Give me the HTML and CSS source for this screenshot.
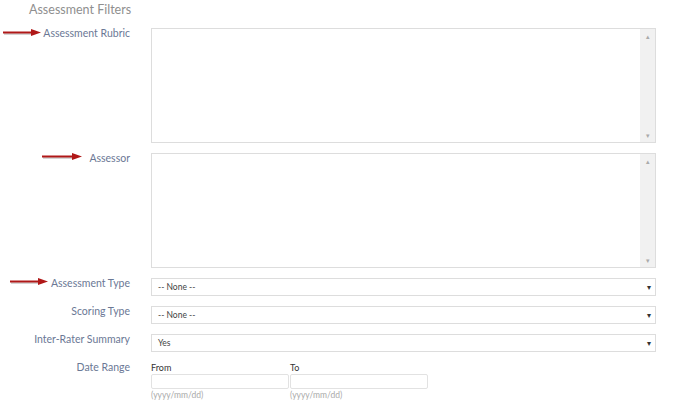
FILE: index.html
```html
<!DOCTYPE html>
<html lang="en">
<head>
    <meta charset="UTF-8">
    <meta name="viewport" content="width=device-width, initial-scale=1.0">
    <title>Assessment Filters</title>
    <link rel="stylesheet" href="styles.css">
</head>
<body>
<div class="filters">
    <h3 class="title">Assessment Filters</h3>

    <div class="row tall">
        <label class="label">
            <svg class="arrow" style="left: 3px; top: 0px;" width="40" height="10" viewBox="0 0 40 10"><line x1="1" y1="6" x2="30" y2="6" stroke="#888" stroke-width="2" opacity="0.35"/><line x1="0" y1="4.5" x2="30" y2="4.5" stroke="#b01818" stroke-width="2"/><polygon points="28,1 38,4.5 28,8" fill="#b01818"/></svg>
            Assessment Rubric
        </label>
        <div class="listbox"><div class="scroll"><span class="up">&#9652;</span><span class="down">&#9662;</span></div></div>
    </div>

    <div class="row tall">
        <label class="label">
            <svg class="arrow" style="left: 42px; top: -1px;" width="42" height="10" viewBox="0 0 42 10"><line x1="1" y1="6" x2="32" y2="6" stroke="#888" stroke-width="2" opacity="0.35"/><line x1="0" y1="4.5" x2="32" y2="4.5" stroke="#b01818" stroke-width="2"/><polygon points="30,1 40,4.5 30,8" fill="#b01818"/></svg>
            Assessor
        </label>
        <div class="listbox"><div class="scroll"><span class="up">&#9652;</span><span class="down">&#9662;</span></div></div>
    </div>

    <div class="row">
        <label class="label">
            <svg class="arrow" style="left: 10px; top: -1px;" width="40" height="10" viewBox="0 0 40 10"><line x1="1" y1="6" x2="30" y2="6" stroke="#888" stroke-width="2" opacity="0.35"/><line x1="0" y1="4.5" x2="30" y2="4.5" stroke="#b01818" stroke-width="2"/><polygon points="28,1 38,4.5 28,8" fill="#b01818"/></svg>
            Assessment Type
        </label>
        <div class="select">-- None --<span class="caret">&#9662;</span></div>
    </div>

    <div class="row">
        <label class="label">Scoring Type</label>
        <div class="select">-- None --<span class="caret">&#9662;</span></div>
    </div>

    <div class="row">
        <label class="label">Inter-Rater Summary</label>
        <div class="select">Yes<span class="caret">&#9662;</span></div>
    </div>

    <div class="row">
        <label class="label">Date Range</label>
        <div class="dates">
            <div class="date">
                <div class="date-title">From</div>
                <div class="input"></div>
                <div class="hint">(yyyy/mm/dd)</div>
            </div>
            <div class="date">
                <div class="date-title">To</div>
                <div class="input"></div>
                <div class="hint">(yyyy/mm/dd)</div>
            </div>
        </div>
    </div>
</div>
</body>
</html>
```

FILE: styles.css
```css
body {
    margin: 0;
    background-color: #fff;
    font-family: Lato, "Open Sans", sans-serif;
    color: #333;
}

.filters {
    padding: 0 23px 0 0;
}

.title {
    margin: 0 0 10px 29px;
    padding-top: 2px;
    font-size: 12.5px;
    font-weight: normal;
    color: #8f8f8f;
    line-height: 16px;
}

.row {
    display: flex;
    gap: 21px;
    margin-bottom: 10px;
}

.label {
    position: relative;
    width: 130px;
    flex: none;
    text-align: right;
    font-size: 10.5px;
    color: #6b7895;
    line-height: 11px;
}

/* red annotation arrows */
.arrow {
    position: absolute;
}

.listbox {
    position: relative;
    width: 503px;
    height: 113px;
    border: 1px solid #ddd;
    background-color: #fff;
}

.scroll {
    position: absolute;
    right: 0;
    top: 0;
    bottom: 0;
    width: 15px;
    background-color: #f1f1f1;
}

.scroll span {
    position: absolute;
    left: 0;
    width: 15px;
    text-align: center;
    font-size: 7px;
    color: #aaa;
    line-height: 8px;
}

.scroll .up {
    top: 3px;
}

.scroll .down {
    bottom: 3px;
}

.select {
    position: relative;
    width: 497px;
    height: 16px;
    border: 1px solid #ddd;
    padding-left: 6px;
    font-size: 8.5px;
    line-height: 16px;
    color: #444;
}

.caret {
    position: absolute;
    right: 4px;
    top: 0;
    font-size: 8px;
    color: #333;
}

.dates {
    display: flex;
    gap: 1px;
}

.date {
    width: 138px;
}

.date-title {
    font-size: 9px;
    color: #333;
    line-height: 11px;
}

.input {
    height: 13px;
    border: 1px solid #e2e2e2;
    border-radius: 2px;
    margin-top: 1px;
}

.hint {
    font-size: 8.5px;
    color: #aaa;
    margin-top: 1px;
    line-height: 10px;
}
```
